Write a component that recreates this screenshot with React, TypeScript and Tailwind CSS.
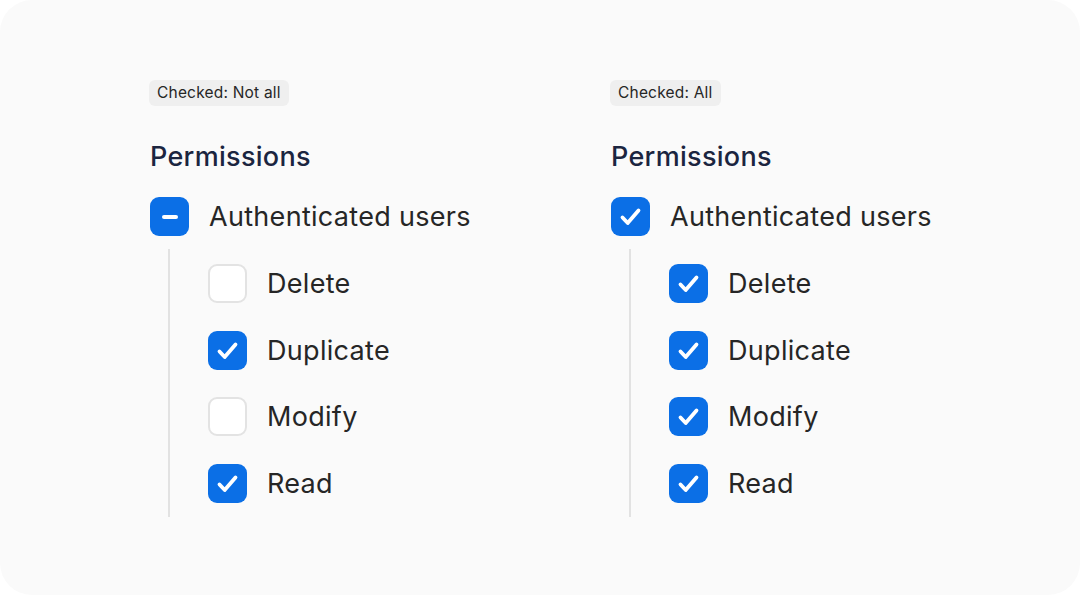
import { Fragment } from "react";

type State = "on" | "off" | "mixed";

function Box({ state }: { state: State }) {
  if (state === "off") {
    return <span className="block w-[39px] h-[39px] shrink-0 rounded-[9px] border-2 border-[#e3e3e3] bg-white" />;
  }
  return (
    <span className="flex items-center justify-center w-[39px] h-[39px] shrink-0 rounded-[9px] bg-[#0b6fe6]">
      {state === "mixed" ? (
        <span className="block w-[16px] h-[4px] rounded-full bg-white" />
      ) : (
        <svg width="39" height="39" viewBox="0 0 39 39" fill="none">
          <path d="M11.5 20.5l5.2 5.5L27.5 13.5" stroke="white" strokeWidth="3.8" strokeLinecap="round" strokeLinejoin="round" />
        </svg>
      )}
    </span>
  );
}

function Row({ state, label }: { state: State; label: string }) {
  return (
    <div className="flex items-center gap-[20px] h-[39px]">
      <Box state={state} />
      <span className="text-[27px] leading-none text-[#262626] tracking-[0.3px]">{label}</span>
    </div>
  );
}

const items = ["Delete", "Duplicate", "Modify", "Read"];

function Group({ badge, parent, children }: { badge: string; parent: State; children: State[] }) {
  return (
    <div className="flex flex-col w-[461px]">
      <div className="self-start -ml-[1px] h-[26px] px-[8px] flex items-center rounded-[6px] bg-[#efefef] text-[15.5px] tracking-[0.2px] text-[#262626]">
        {badge}
      </div>
      <h2 className="mt-[35px] text-[27px] leading-[32px] font-medium tracking-[0.3px] text-[#1b2540]">Permissions</h2>
      <div className="mt-[24px]">
        <Row state={parent} label="Authenticated users" />
      </div>
      <div className="mt-[13px] ml-[18px] border-l-2 border-[#e2e2e2] pl-[38px] pt-[15px] pb-[14px] flex flex-col gap-[27.67px]">
        {items.map((it, i) => (
          <Fragment key={it}>
            <Row state={children[i]} label={it} />
          </Fragment>
        ))}
      </div>
    </div>
  );
}

export default function App() {
  return (
    <div className="w-[1080px] h-[595px] bg-white" style={{ fontFamily: "Inter, 'Noto Sans', sans-serif" }}>
      <div className="w-full h-full rounded-[32px] bg-[#fafafa] pl-[150px] pt-[80px] flex">
        <Group badge="Checked: Not all" parent="mixed" children={["off", "on", "off", "on"]} />
        <Group badge="Checked: All" parent="on" children={["on", "on", "on", "on"]} />
      </div>
    </div>
  );
}
